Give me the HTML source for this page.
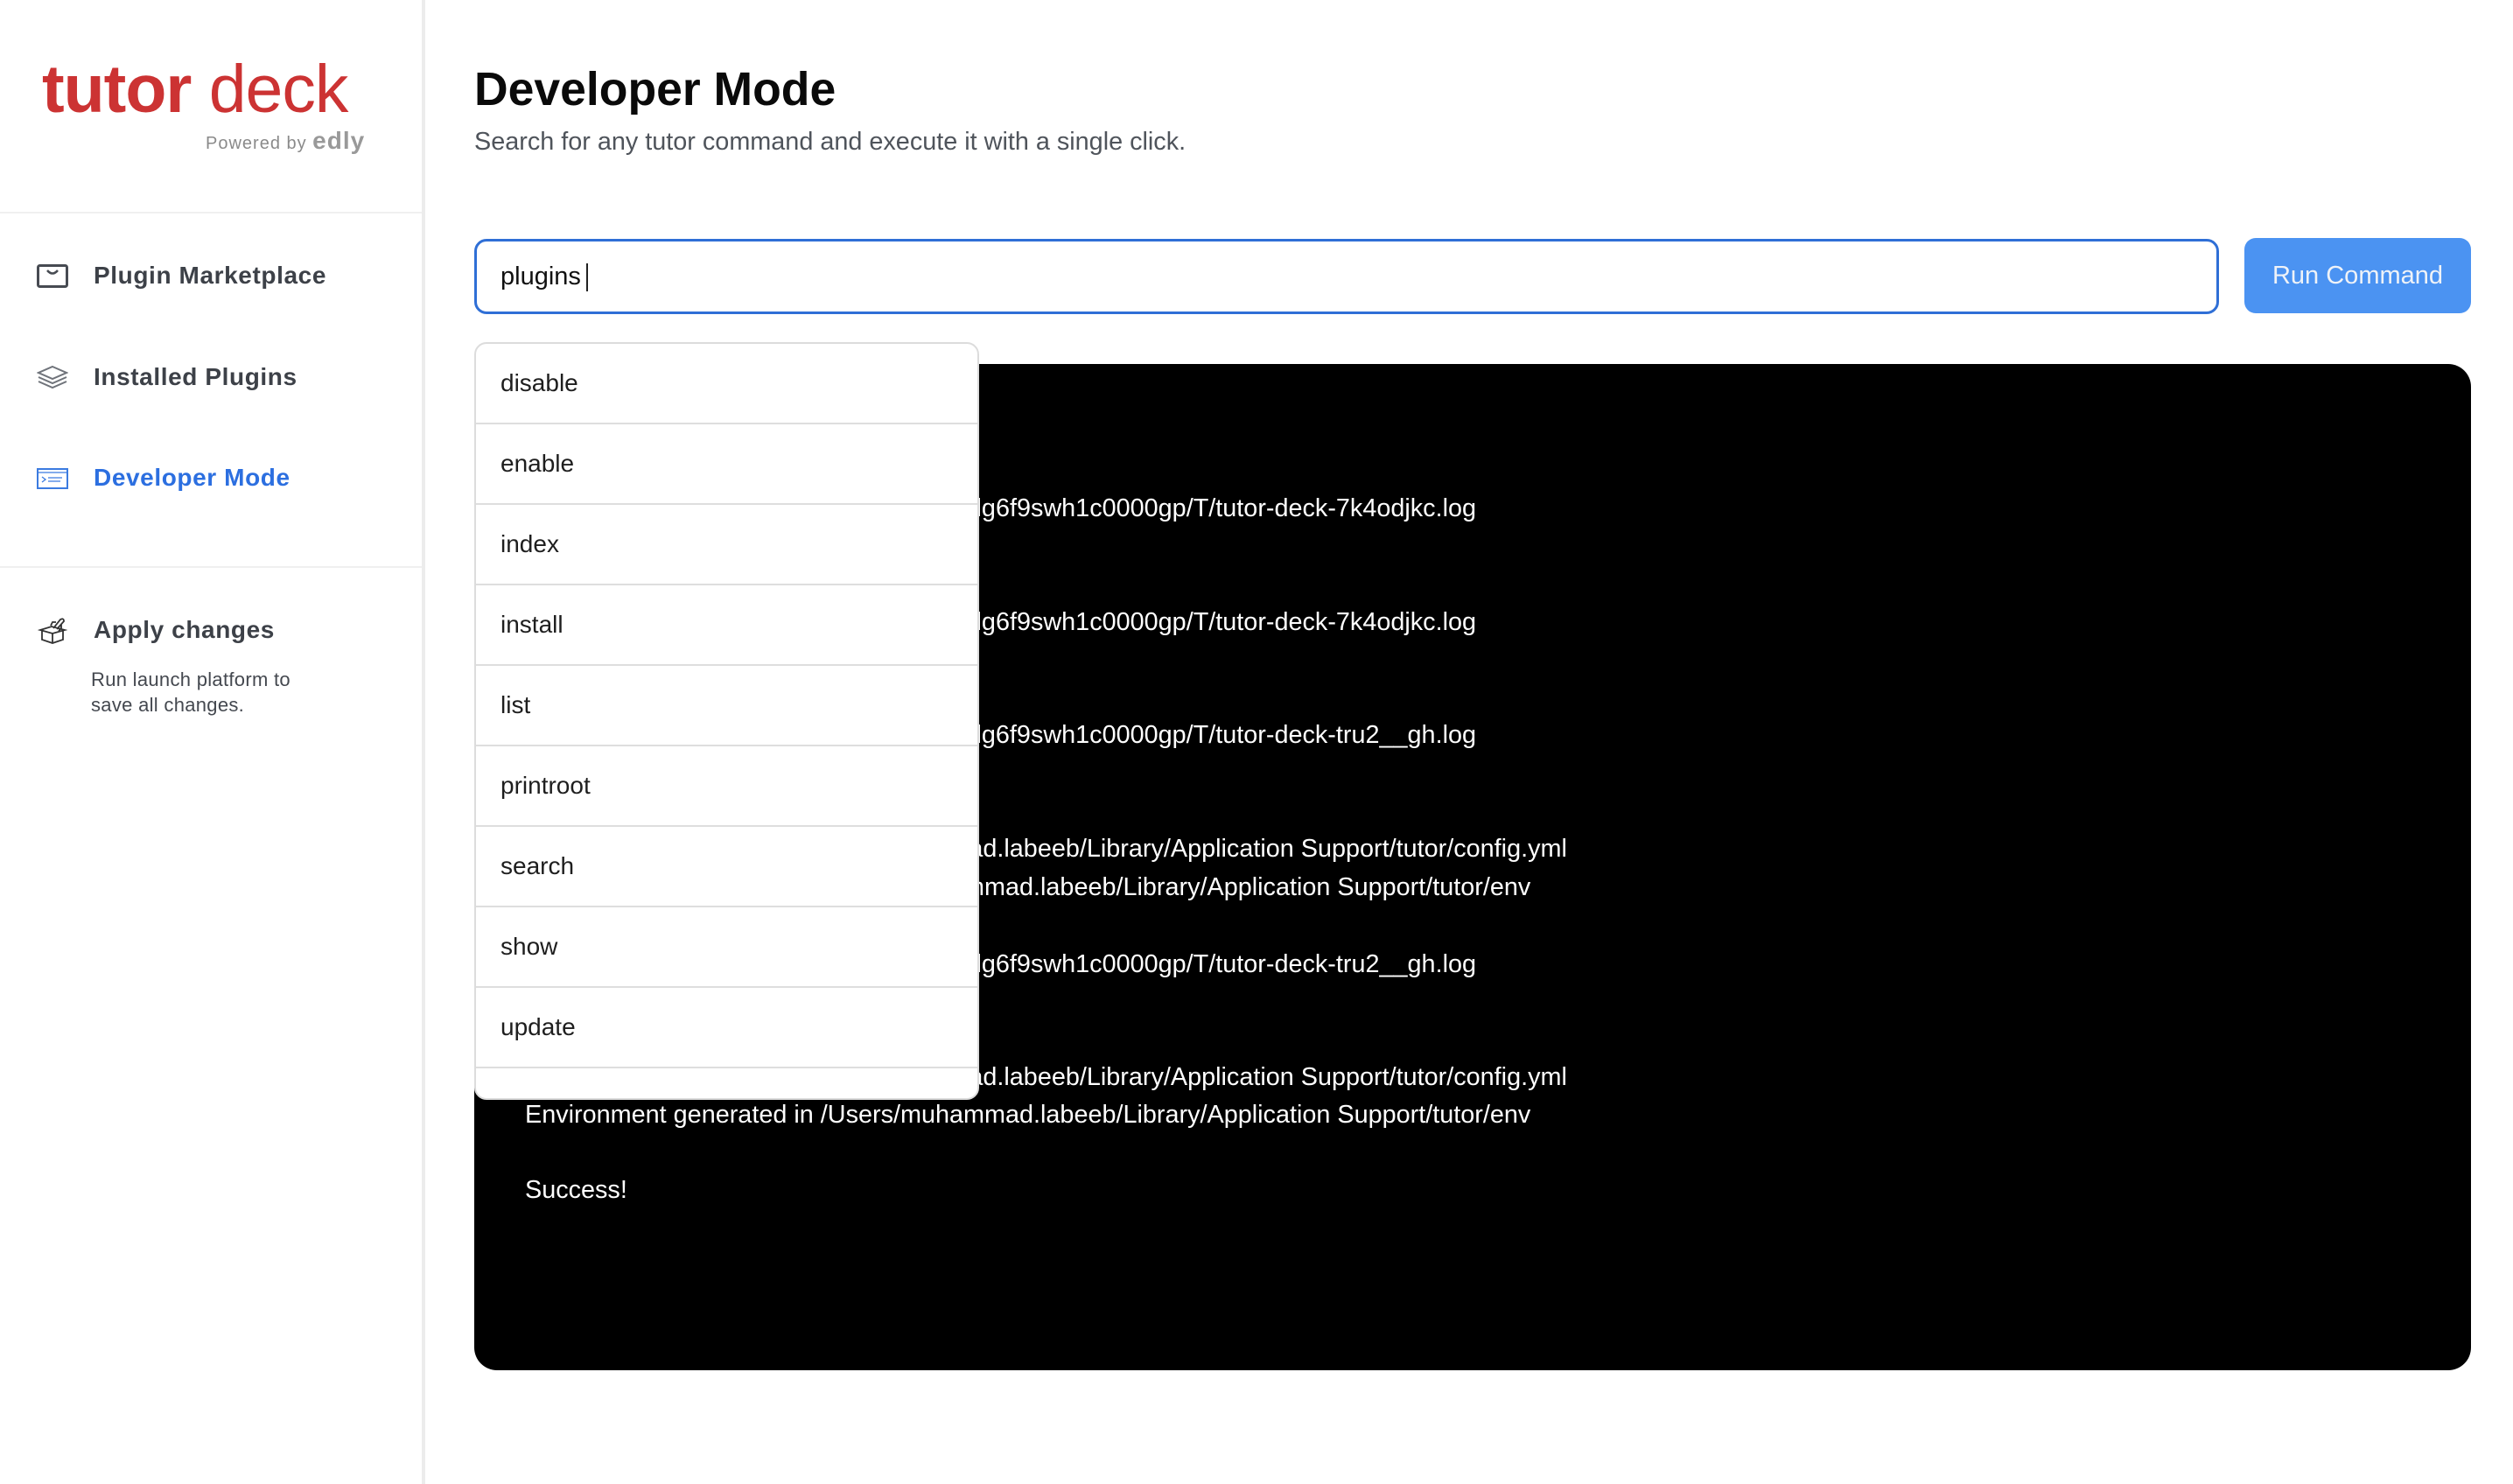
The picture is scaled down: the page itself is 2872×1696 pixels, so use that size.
<!DOCTYPE html>
<html><head><meta charset="utf-8"><style>
*{box-sizing:border-box;margin:0;padding:0}
body{width:2872px;height:1696px;background:#fff;font-family:"Liberation Sans",Arial,sans-serif;position:relative;overflow:hidden}
.abs{position:absolute}
.side{left:0;top:0;width:486px;height:1696px;border-right:4px solid #ececec;background:#fff}
.hr{left:0;width:482px;height:2px;background:#f0f0f0}
.nav{left:107px;font-size:28px;font-weight:bold;color:#3d4148;letter-spacing:0.6px;white-space:nowrap}
.ico{left:42px}
.term{left:542px;top:416px;width:2282px;height:1150px;background:#000;border-radius:26px}
.tl{position:absolute;color:#fff;font-size:28.8px;white-space:nowrap;left:58px}
.tr{position:absolute;color:#fff;font-size:28.8px;white-space:nowrap;left:0;width:1145px;text-align:right}
.dd{left:542px;top:391px;width:577px;height:866px;background:#fff;border:2px solid #dcdcdc;border-radius:14px;overflow:hidden}
.it{height:92px;border-bottom:2px solid #dedede;font-size:28px;color:#1e1e1e;padding-left:28px;line-height:90px}
</style></head><body>
<div class="abs side">
  <div class="abs" style="left:48px;top:64px;font-size:77px;color:#cc3333;white-space:nowrap;letter-spacing:-1px;line-height:1"><span style="font-weight:bold">tutor</span> deck</div>
  <div class="abs" style="left:235px;top:145px;font-size:20px;color:#8a8a8a;white-space:nowrap;letter-spacing:1px">Powered by <span style="font-weight:bold;font-size:28px;color:#999">edly</span></div>
  <div class="abs hr" style="top:242px"></div>
  <svg class="abs ico" style="top:302px" width="36" height="28" viewBox="0 0 36 28"><rect x="1.5" y="1.5" width="33" height="24" rx="2" fill="none" stroke="#474b52" stroke-width="3"/><path d="M12 7q6 7 12 0" fill="none" stroke="#474b52" stroke-width="2.5"/></svg>
  <div class="abs nav" style="top:299px">Plugin Marketplace</div>
  <svg class="abs ico" style="top:417px" width="36" height="28" viewBox="0 0 36 28"><path d="M18 2L34 9L18 16L2 9Z M2 14L18 21L34 14 M2 19L18 26L34 19" fill="none" stroke="#6f737a" stroke-width="2"/></svg>
  <div class="abs nav" style="top:415px">Installed Plugins</div>
  <svg class="abs ico" style="top:535px" width="36" height="24" viewBox="0 0 36 24"><rect x="1" y="1" width="34" height="22" fill="none" stroke="#3b7be0" stroke-width="2"/><path d="M1 5H35 M6 10l4 3-4 3 M13 11h16 M13 15h14" fill="none" stroke="#3b7be0" stroke-width="1.3"/></svg>
  <div class="abs nav" style="top:530px;color:#2c6fe0">Developer Mode</div>
  <div class="abs hr" style="top:647px"></div>
  <svg class="abs ico" style="top:702px;left:43px" width="34" height="34" viewBox="0 0 34 34"><path d="M3 18L16 14L31 18L17 22Z M5 19V29L17 33L29 29V19 M17 22V33 M18 16L26 6q4-2 4 2L22 17 M21 9l-4 0-2 4 M27 12l0 4-3 3" fill="none" stroke="#333" stroke-width="1.8"/></svg>
  <div class="abs nav" style="top:704px">Apply changes</div>
  <div class="abs" style="left:104px;top:762px;font-size:22px;color:#44484f;line-height:29px;letter-spacing:0.3px">Run launch platform to<br>save all changes.</div>
</div>

<div class="abs" style="left:542px;top:72px;font-size:53.5px;font-weight:bold;color:#0a0a0a;white-space:nowrap">Developer Mode</div>
<div class="abs" style="left:542px;top:146px;font-size:28.8px;color:#4f545b;white-space:nowrap">Search for any tutor command and execute it with a single click.</div>

<div class="abs" style="left:542px;top:273px;width:1994px;height:86px;border:3px solid #2f6fd6;border-radius:14px;font-size:29px;color:#111;padding-left:27px;line-height:80px">plugins<span style="display:inline-block;width:2px;height:32px;background:#222;vertical-align:middle;margin-left:6px"></span></div>
<div class="abs" style="left:2565px;top:272px;width:259px;height:86px;background:#4b93f2;border-radius:13px;color:#eef2f8;font-size:29px;text-align:center;line-height:86px">Run Command</div>

<div class="abs term">
  <div class="tr" style="top:149px">lg6f9swh1c0000gp/T/tutor-deck-7k4odjkc.log</div>
  <div class="tr" style="top:279px">lg6f9swh1c0000gp/T/tutor-deck-7k4odjkc.log</div>
  <div class="tr" style="top:408px">lg6f9swh1c0000gp/T/tutor-deck-tru2__gh.log</div>
  <div class="tl" style="top:538px">Configuration saved to /Users/muhammad.labeeb/Library/Application Support/tutor/config.yml</div>
  <div class="tl" style="top:582px">Environment generated in /Users/muhammad.labeeb/Library/Application Support/tutor/env</div>
  <div class="tr" style="top:670px">lg6f9swh1c0000gp/T/tutor-deck-tru2__gh.log</div>
  <div class="tl" style="top:799px">Configuration saved to /Users/muhammad.labeeb/Library/Application Support/tutor/config.yml</div>
  <div class="tl" style="top:842px">Environment generated in /Users/muhammad.labeeb/Library/Application Support/tutor/env</div>
  <div class="tl" style="top:928px">Success!</div>
</div>

<div class="abs dd">
  <div class="it">disable</div><div class="it">enable</div><div class="it">index</div><div class="it">install</div><div class="it">list</div><div class="it">printroot</div><div class="it">search</div><div class="it">show</div><div class="it">update</div><div class="it">upgrade</div>
</div>
</body></html>
